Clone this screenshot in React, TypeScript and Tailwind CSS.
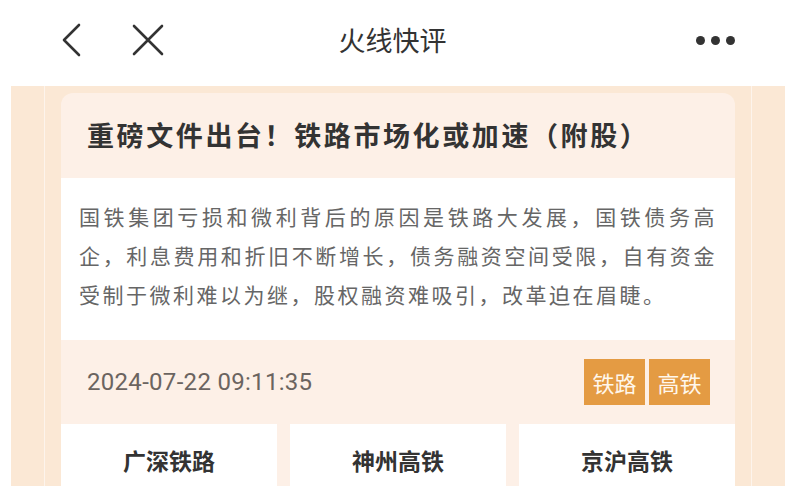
import React from 'react';

const cjk = '"Noto Sans CJK SC", "Noto Sans", sans-serif';

const stocks = ['广深铁路', '神州高铁', '京沪高铁'];
const tags = ['铁路', '高铁'];

const summary = [
  '国铁集团亏损和微利背后的原因是铁路大发展，国铁债务高',
  '企，利息费用和折旧不断增长，债务融资空间受限，自有资金',
  '受制于微利难以为继，股权融资难吸引，改革迫在眉睫。',
];

export default function App() {
  return (
    <div className="w-full h-[486px] overflow-hidden bg-white flex flex-col" style={{ fontFamily: cjk }}>
      {/* Header */}
      <div className="h-[86px] shrink-0 flex items-center relative px-[58px] pb-[6px]">
        <svg width="28" height="36" viewBox="0 0 28 36" className="mr-[45px]">
          <path d="M21 3 L6 18 L21 33" fill="none" stroke="#333" strokeWidth="2.6" strokeLinecap="round" strokeLinejoin="round" />
        </svg>
        <svg width="34" height="34" viewBox="0 0 34 34">
          <path d="M3 3 L31 31 M31 3 L3 31" fill="none" stroke="#333" strokeWidth="2.6" strokeLinecap="round" />
        </svg>
        <div className="absolute left-0 right-0 top-0 h-[80px] flex items-center justify-center text-[27px] text-[#333] pointer-events-none">
          火线快评
        </div>
        <div className="ml-auto flex gap-[6px] mr-[-8px]">
          <span className="w-[9px] h-[9px] rounded-full bg-[#333]" />
          <span className="w-[9px] h-[9px] rounded-full bg-[#333]" />
          <span className="w-[9px] h-[9px] rounded-full bg-[#333]" />
        </div>
      </div>

      {/* Page body */}
      <div className="flex-1 ml-[11px] bg-[#fbe8d5]">
        <div className="mx-[33px] h-full border-x border-[#fdf4ec] px-[16px] pt-[7px]">
          <div className="rounded-t-[12px] bg-[#fdf0e7] overflow-hidden">
            <div className="h-[85px] flex items-center pl-[26px]">
              <h1 className="text-[27px] font-bold text-[#333] tracking-[2.6px] whitespace-nowrap">
                重磅文件出台！铁路市场化或加速（附股）
              </h1>
            </div>
            <div className="h-[162px] bg-white px-[18px] pt-[19px]">
              {summary.map((line, i) => (
                <p
                  key={i}
                  className={`text-[21px] leading-[39px] tracking-[2.5px] text-[#666] whitespace-nowrap ${
                    i < 2 ? 'text-justify [text-align-last:justify]' : ''
                  }`}
                >
                  {line}
                </p>
              ))}
            </div>
            <div className="h-[84px] flex items-center justify-between pl-[26px] pr-[25px]">
              <span
                className="text-[24px] tracking-[0.3px] text-[#6b6460]"
                style={{ fontFamily: 'Roboto, "Noto Sans", sans-serif' }}
              >
                2024-07-22 09:11:35
              </span>
              <div className="flex gap-[4px]">
                {tags.map((t) => (
                  <span
                    key={t}
                    className="w-[61px] h-[46px] flex items-center justify-center bg-[#e49b43] text-[#fff7ec] text-[22px]"
                  >
                    {t}
                  </span>
                ))}
              </div>
            </div>
            <div className="grid grid-cols-3 gap-[13px]">
              {stocks.map((s) => (
                <div key={s} className="h-[80px] bg-white flex justify-center pt-[19px]">
                  <span className="text-[23px] font-bold text-[#333]">{s}</span>
                </div>
              ))}
            </div>
          </div>
        </div>
      </div>
    </div>
  );
}
